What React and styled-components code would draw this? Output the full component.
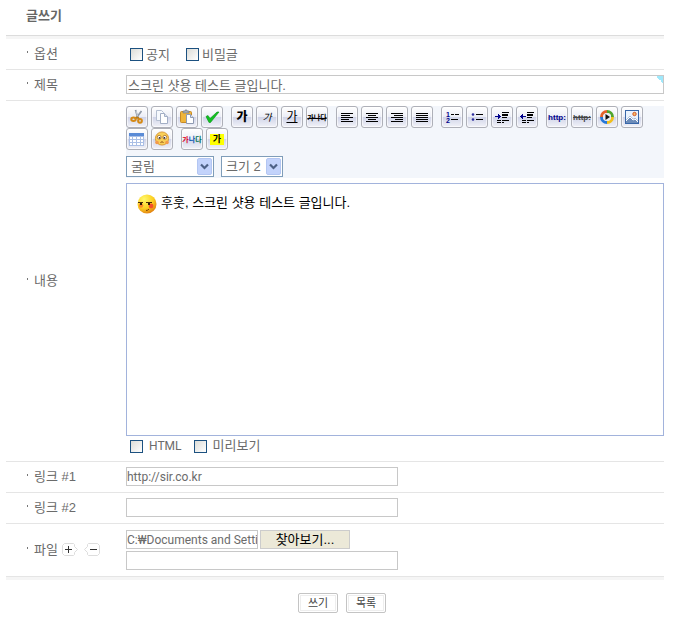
import React, { useState } from "react";
import styled, { createGlobalStyle } from "styled-components";

const GlobalStyle = createGlobalStyle`
  * {
    box-sizing: border-box;
  }
  body {
    margin: 0;
    background: #fff;
  }
  body, button, input, select {
    font-family: "Liberation Sans", "Noto Sans CJK KR", sans-serif;
    font-size: 13px;
    line-height: 18px;
    color: #6b6b6b;
  }
`;

const Page = styled.form`
  padding: 0 9px 0 6px;
`;

const Title = styled.h1`
  margin: 0;
  padding: 7px 20px 10px;
  font-size: 13px;
  line-height: 18px;
  color: #666;
`;

const Rows = styled.div`
  border-top: 1px solid #dcdcdc;
  &::before,
  &::after {
    content: "";
    display: block;
    height: 3px;
    background: #f5f5f5;
  }
`;

const Row = styled.div`
  display: grid;
  grid-template-columns: 120px minmax(0, 1fr);
  align-items: center;
  min-height: 31px;
  border-bottom: 1px solid #e5e5e5;
`;

const Caption = styled.div`
  display: flex;
  align-items: center;
  padding-left: 20px;
  &::before {
    content: "";
    width: 1px;
    height: 2px;
    margin: 0 6px 4px 1px;
    background: #777;
  }
`;

const Field = styled.div`
  padding: 5px 0 6px;
`;

const FileField = styled.div`
  display: grid;
  gap: 2px;
  padding: 6px 0;
`;

const FileLine = styled.div`
  display: flex;
  gap: 2px;
`;

const TextInput = styled.input`
  display: block;
  width: ${props => props.$width || "100%"};
  height: 19px;
  margin: 0;
  padding: 0 1px;
  border: 1px solid #c8c8c8;
  border-radius: 0;
  background: ${props => (props.$required ? "linear-gradient(45deg, transparent 50%, #9fe8fb 50%) right top / 7px 7px no-repeat" : "none")};
  line-height: 17px;
  outline: none;
`;

const LatinInput = styled(TextInput)`
  padding: 0;
  font-family: Roboto, "Noto Sans CJK KR", sans-serif;
  font-size: 12px;
`;

const Browse = styled.button`
  width: 90px;
  height: 19px;
  padding: 0;
  border: 1px solid #ccc;
  background: #ece9d8;
  color: #000;
  line-height: 15px;
`;

const Checks = styled.div`
  display: flex;
  gap: ${props => props.$gap};
  padding: 1px 4px 0;
`;

const CheckLabel = styled.label`
  display: flex;
  align-items: center;
  gap: ${props => props.$gap};
`;

const CheckBox = styled.input`
  appearance: none;
  width: 13px;
  height: 13px;
  margin: 0;
  border: 1px solid #1c5180;
  background: linear-gradient(135deg, #dcdcd7, #fff);
  &:checked {
    box-shadow: inset 0 0 0 3px #fff;
    background: #21a121;
  }
`;

const Latin = styled.span`
  font-family: Roboto, sans-serif;
  font-size: 12px;
`;

const Toolbar = styled.div`
  padding-bottom: 1px;
  background: #f3f6fb;
`;

const Tools = styled.div`
  display: flex;
  flex-wrap: wrap;
  column-gap: 3px;
`;

const Divider = styled.span`
  width: 2px;
`;

const Tool = styled.button`
  display: flex;
  align-items: center;
  justify-content: center;
  width: 22px;
  height: 22px;
  padding: 0;
  overflow: hidden;
  border: 1px solid #aeb0b8;
  border-radius: 3px;
  background: linear-gradient(#fff, #eceef6 48%, #cfd3e8 50%, #f1f2f8);
  box-shadow: inset 0 0 0 1px rgba(255, 255, 255, 0.6);
  svg {
    display: block;
    flex: none;
  }
`;

const Glyph = styled.span`
  padding: 0 ${props => (props.$back ? "3px" : "0")};
  font-size: ${props => props.$size || "10px"};
  font-weight: ${props => props.$weight || "bold"};
  font-style: ${props => props.$slant || "normal"};
  text-decoration: ${props => props.$line || "none"};
  background: ${props => props.$back || "none"};
  color: ${props => props.$color || "#000"};
  line-height: 11px;
  white-space: nowrap;
  i {
    font-style: normal;
  }
  i:nth-child(1) {
    color: #e00020;
  }
  i:nth-child(2) {
    color: #0054b0;
  }
  i:nth-child(3) {
    color: #007050;
  }
`;

const Selects = styled.div`
  display: flex;
  gap: 7px;
  padding-top: 6px;
`;

const SelectBox = styled.div`
  position: relative;
  width: ${props => props.$width};
  svg {
    position: absolute;
    top: 2px;
    right: 2px;
    pointer-events: none;
  }
`;

const Select = styled.select`
  appearance: none;
  display: block;
  width: 100%;
  height: 21px;
  padding: 0 4px;
  border: 1px solid #7f9db9;
  border-radius: 0;
  background: #fff;
  line-height: 19px;
`;

const Editor = styled.div`
  display: flex;
  align-items: flex-start;
  gap: 4px;
  height: 253px;
  margin-top: 5px;
  padding: 10px;
  border: 1px solid #a2b3dc;
  color: #000;
  outline: none;
`;

const FileButton = styled.button`
  display: block;
  margin-left: 4px;
  padding: 0;
  border: 0;
  background: none;
  svg {
    display: block;
  }
`;

const Footer = styled.div`
  display: flex;
  justify-content: center;
  gap: 8px;
  padding: 13px 0 7px 14px;
`;

const Action = styled.button`
  width: 40px;
  height: 20px;
  padding: 0;
  border: 1px solid #c4c4c4;
  border-radius: 2px;
  background: #fff;
  box-shadow: inset 0 0 0 1px #fff, inset 0 0 0 2px #eee;
  font-size: 11px;
  line-height: 16px;
  color: #444;
`;

const Icon = ({ children, crisp }) => (
  <svg
    width="20"
    height="20"
    viewBox="1 1 20 20"
    fill="none"
    shapeRendering={crisp ? "crispEdges" : "auto"}
    aria-hidden="true"
  >
    {children}
  </svg>
);

// each line is [x, width]
const Lines = ({ lines }) => (
  <Icon crisp>
    {lines.map(([x, w], i) => (
      <rect key={i} x={x} y={7 + i * 2} width={w} height="1" fill="#000" />
    ))}
  </Icon>
);

const Indent = ({ out }) => (
  <Icon crisp>
    <path
      d={out ? "M4 10h1v-1h1v-1h1v2h3v1h-3v2h-1v-1h-1v-1h-1z" : "M4 10h3v-2h1v1h1v1h1v1h-1v1h-1v1h-1v-2h-3z"}
      fill="#00008b"
    />
    <path
      d="M11 6h7v1h-7zM11 8h6v2h-6zM11 11h5v1h-5zM6 14h4v1h-4zM11 14h7v1h-7zM6 16h4v1h-4zM11 16h2v1h-2z"
      fill="#000"
    />
  </Icon>
);

const Cut = () => (
  <Icon>
    <path d="M9.5 4l2.4 8M15.5 5l-4.8 6.5" stroke="#8f99a8" strokeWidth="1.7" />
    <path d="M10 5l1.6 5" stroke="#dbe2ea" strokeWidth="0.7" />
    <path d="M11 11l-2 2M11.5 11l2 3" stroke="#b67a1b" strokeWidth="2" />
    <ellipse cx="7.5" cy="13.3" rx="2.2" ry="1.7" stroke="#d58a17" strokeWidth="2" />
    <ellipse cx="14" cy="14.8" rx="1.9" ry="1.9" stroke="#d58a17" strokeWidth="2" />
  </Icon>
);

const Copy = () => (
  <Icon>
    <path d="M5.5 4.5h5l2 2v8h-7z" fill="#f6f9fd" stroke="#b4bfd1" />
    <path d="M9.5 7.5h4l3 3v7h-7z" fill="#fff" stroke="#a2aec5" />
    <path d="M13.5 7.5v3h3" fill="#dbe3f0" stroke="#a2aec5" />
  </Icon>
);

const Paste = () => (
  <Icon>
    <rect x="4.5" y="5.5" width="11" height="11" rx="1" fill="#efb53b" stroke="#c78a26" />
    <path d="M7 7V5h2V4h2v1h2v2z" fill="#a5adb8" stroke="#6f7680" strokeWidth="0.6" />
    <path d="M10.5 8.5h4l3 3v6h-7z" fill="#fff" stroke="#8f9bb3" />
    <path d="M14.5 8.5v3h3" fill="#dbe3f0" stroke="#8f9bb3" />
  </Icon>
);

const Check = () => (
  <Icon>
    <path d="M5 10.5l2-1 2 3 7-6.500h2l-8.500 10.500h-1.500z" fill="#10c020" stroke="#079316" strokeWidth="0.6" />
  </Icon>
);

const Numbers = () => (
  <Icon crisp>
    <text x="5" y="11" fontSize="7" fontWeight="bold" fill="#00008b">1</text>
    <text x="5" y="17" fontSize="7" fontWeight="bold" fill="#00008b">2</text>
    <path d="M10 8h3v1h-3zM14 8h4v1h-4zM10 13h7v1h-7z" fill="#000" />
  </Icon>
);

const Bullets = () => (
  <Icon>
    <circle cx="7" cy="8.5" r="1.3" fill="#2b2b9d" />
    <circle cx="7" cy="13.5" r="1.3" fill="#2b2b9d" />
    <path d="M10 8h7v1h-7zM10 13h7v1h-7z" fill="#000" />
  </Icon>
);

const Media = () => (
  <Icon>
    <g strokeWidth="3">
      <path d="M11 5.5a5.500 5.500 0 0 1 5.500 5.500" stroke="#50a52d" />
      <path d="M16.5 11a5.500 5.500 0 0 1-5.500 5.500" stroke="#f1bf1c" />
      <path d="M11 16.5a5.500 5.500 0 0 1-5.500-5.500" stroke="#2677d8" />
      <path d="M5.5 11a5.500 5.500 0 0 1 5.500-5.500" stroke="#e3622a" />
    </g>
    <circle cx="11" cy="11" r="4" fill="#e8edf2" />
    <path d="M9.5 8l4.500 3-4.500 3z" fill="#111" />
  </Icon>
);

const Picture = () => (
  <Icon>
    <rect x="4.5" y="4.5" width="13" height="13" fill="#e9f2fd" stroke="#3766a8" />
    <path d="M5 14l4-4 3 3 2-1 3 3v2h-12z" fill="#6c8cb9" />
    <path d="M5 15l4-4 3 3 2-1 3 3" stroke="#fff" />
    <circle cx="13.5" cy="8" r="1.7" fill="#f5bd66" stroke="#d4572a" />
  </Icon>
);

const Grid = () => (
  <Icon crisp>
    <rect x="3" y="5" width="15" height="13" fill="#fff" />
    <rect x="3" y="5" width="15" height="3" fill="#5a8bd6" />
    <path
      d="M3 8h15v1h-15zM3 11h15v1h-15zM3 14h15v1h-15zM3 17h15v1h-15zM3 8h1v10h-1zM6 8h1v10h-1zM10 8h1v10h-1zM14 8h1v10h-1zM17 8h1v10h-1z"
      fill="#aabfe5"
    />
  </Icon>
);

const Smiley = () => (
  <Icon>
    <circle cx="11" cy="10.5" r="6.6" fill="#f9cf58" stroke="#d38a27" strokeWidth="0.8" />
    <circle cx="8.2" cy="9.3" r="1.9" fill="#fff" stroke="#9c5c17" strokeWidth="0.7" />
    <circle cx="13.8" cy="9.3" r="1.9" fill="#fff" stroke="#9c5c17" strokeWidth="0.7" />
    <circle cx="8.6" cy="9.8" r="0.9" fill="#222" />
    <circle cx="13.4" cy="9.8" r="0.9" fill="#222" />
    <path d="M9.5 14.500q1.500-1.500 3 0" stroke="#8c4b13" />
    <circle cx="6" cy="14.5" r="1.8" fill="#f39a4b" />
    <circle cx="16" cy="14.5" r="1.8" fill="#f39a4b" />
  </Icon>
);

const Smirk = () => (
  <svg width="20" height="20" viewBox="0 0 20 20" fill="none" role="img" aria-label="후훗">
    <defs>
      <radialGradient id="face" cx="0.35" cy="0.25" r="0.8">
        <stop offset="0" stopColor="#fff86a" />
        <stop offset="0.6" stopColor="#fccf20" />
        <stop offset="1" stopColor="#e07c10" />
      </radialGradient>
    </defs>
    <circle cx="10" cy="10" r="9.5" fill="url(#face)" />
    <circle cx="4" cy="11.5" r="2.2" fill="#f98a2c" />
    <circle cx="14" cy="12" r="2.4" fill="#f4502a" />
    <path d="M1 8.500h5M9 8.500h6" stroke="#4a2b08" strokeWidth="1.2" />
    <path d="M3 9h2v2h-2zM11 9h2v2h-2z" fill="#2a1a05" />
    <path d="M9 16.500q2 0 3-1.500" stroke="#7a3c08" />
  </svg>
);

const Arrow = () => (
  <svg width="15" height="17" viewBox="0 0 15 17" fill="none" aria-hidden="true">
    <rect x="0.5" y="0.5" width="14" height="16" rx="1.5" fill="#c3d3fb" stroke="#b3c6f2" />
    <path d="M4 6.500l3.500 3.500 3.500-3.500" stroke="#4d6185" strokeWidth="2.2" />
  </svg>
);

const FileIcon = ({ minus }) => (
  <svg width="17" height="14" viewBox="0 0 17 14" fill="none" aria-hidden="true">
    <path
      d={minus ? "M5.5.5h9l2 2v8l-2 2h-9l-1-1v-2l-3-3 3-3v-2z" : "M2.5.5h9l1 1v2l3 3-3 3v2l-1 1h-9l-2-2v-8z"}
      stroke="#ddd"
    />
    <path d={minus ? "M7 6h7v1h-7z" : "M3 6h7v1h-7zM6 3h1v7h-1z"} fill="#333" />
  </svg>
);

const tools = [
  ["잘라내기", <Cut />],
  ["복사", <Copy />],
  ["붙여넣기", <Paste />],
  ["맞춤법", <Check />],
  null,
  ["굵게", <Glyph $size="12px" $weight="900">가</Glyph>],
  ["기울임", <Glyph $slant="italic" $weight="normal">가</Glyph>],
  ["밑줄", <Glyph $size="12px" $weight="normal" $line="underline">가</Glyph>],
  ["취소선", <Glyph $size="7px" $line="line-through">가나다</Glyph>],
  null,
  ["왼쪽 정렬", <Lines lines={[[5, 12], [5, 9], [5, 12], [5, 8], [5, 12]]} />],
  ["가운데 정렬", <Lines lines={[[5, 12], [7, 8], [5, 12], [7, 8], [5, 12]]} />],
  ["오른쪽 정렬", <Lines lines={[[5, 12], [8, 9], [5, 12], [9, 8], [5, 12]]} />],
  ["양쪽 정렬", <Lines lines={[[5, 12], [5, 12], [5, 12], [5, 12], [5, 12]]} />],
  null,
  ["번호 목록", <Numbers />],
  ["목록", <Bullets />],
  ["들여쓰기", <Indent />],
  ["내어쓰기", <Indent out />],
  null,
  ["링크", <Glyph $size="8px" $color="#00008b">http:</Glyph>],
  ["링크 해제", <Glyph $size="8px" $color="#444" $line="line-through">http:</Glyph>],
  ["미디어", <Media />],
  ["그림", <Picture />],
  ["표", <Grid />],
  ["이모티콘", <Smiley />],
  null,
  ["글자색", <Glyph $size="7px"><i>가</i><i>나</i><i>다</i></Glyph>],
  ["배경색", <Glyph $size="9px" $back="#ff0">가</Glyph>]
];

const CheckItem = ({ children, gap }) => (
  <CheckLabel $gap={gap}>
    <CheckBox type="checkbox" />
    {children}
  </CheckLabel>
);

const App = () => {
  const [subject, setSubject] = useState("스크린 샷용 테스트 글입니다.");

  return (
    <>
      <GlobalStyle />
      <Page onSubmit={e => e.preventDefault()}>
        <Title>글쓰기</Title>
        <Rows>
          <Row>
            <Caption>옵션</Caption>
            <Checks $gap="16px">
              <CheckItem gap="3px">공지</CheckItem>
              <CheckItem gap="3px">비밀글</CheckItem>
            </Checks>
          </Row>
          <Row>
            <Caption as="label" htmlFor="subject">제목</Caption>
            <Field>
              <TextInput
                id="subject"
                $required
                value={subject}
                onChange={e => setSubject(e.target.value)}
              />
            </Field>
          </Row>
          <Row>
            <Caption id="content-label">내용</Caption>
            <Field>
              <Toolbar>
                <Tools>
                  {tools.map((tool, i) =>
                    tool ? (
                      <Tool key={i} type="button" aria-label={tool[0]}>
                        {tool[1]}
                      </Tool>
                    ) : (
                      <Divider key={i} />
                    )
                  )}
                </Tools>
                <Selects>
                  <SelectBox $width="88px">
                    <Select aria-label="글꼴">
                      <option>굴림</option>
                    </Select>
                    <Arrow />
                  </SelectBox>
                  <SelectBox $width="62px">
                    <Select aria-label="글자 크기">
                      <option>크기 2</option>
                    </Select>
                    <Arrow />
                  </SelectBox>
                </Selects>
              </Toolbar>
              <Editor
                contentEditable
                suppressContentEditableWarning
                role="textbox"
                aria-multiline="true"
                aria-labelledby="content-label"
              >
                <Smirk />
                <span>후훗, 스크린 샷용 테스트 글입니다.</span>
              </Editor>
              <Checks $gap="12px">
                <CheckItem gap="6px">
                  <Latin>HTML</Latin>
                </CheckItem>
                <CheckItem gap="6px">미리보기</CheckItem>
              </Checks>
            </Field>
          </Row>
          <Row>
            <Caption as="label" htmlFor="link1">링크 #1</Caption>
            <Field>
              <LatinInput id="link1" $width="272px" defaultValue="http://sir.co.kr" />
            </Field>
          </Row>
          <Row>
            <Caption as="label" htmlFor="link2">링크 #2</Caption>
            <Field>
              <LatinInput id="link2" $width="272px" />
            </Field>
          </Row>
          <Row>
            <Caption>
              <label htmlFor="file">파일</label>
              <FileButton type="button" aria-label="파일 추가">
                <FileIcon />
              </FileButton>
              <FileButton type="button" aria-label="파일 삭제">
                <FileIcon minus />
              </FileButton>
            </Caption>
            <FileField>
              <FileLine>
                <LatinInput id="file" $width="132px" defaultValue="C:₩Documents and Settings" />
                <Browse type="button">찾아보기...</Browse>
              </FileLine>
              <LatinInput aria-label="파일 설명" $width="272px" />
            </FileField>
          </Row>
        </Rows>
        <Footer>
          <Action type="submit">쓰기</Action>
          <Action type="button">목록</Action>
        </Footer>
      </Page>
    </>
  );
};

export default App;
